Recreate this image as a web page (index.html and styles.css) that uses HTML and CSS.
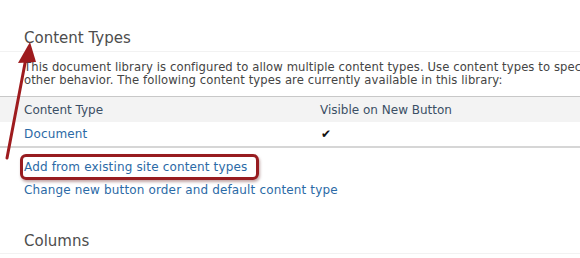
FILE: index.html
```
<html>
  <head>
    <title>Content Types</title>
    <link rel="stylesheet" href="styles.css">
  </head>
  <body>
    <div class="page">
      <h2 class="sectionTitle">Content Types</h2>
      <p class="description">
        <span class="line">This document library is configured to allow multiple content types. Use content types to specify the information you want to display about an item, in addition to its policies, workflows, or</span>
        <span class="line">other behavior. The following content types are currently available in this library:</span>
      </p>

      <div class="typesTable">
        <div class="row headRow">
          <span class="colName">Content Type</span>
          <span class="colVisible">Visible on New Button</span>
        </div>
        <div class="row">
          <a class="link colName" href="#">Document</a>
          <span class="colVisible check">&#10004;</span>
        </div>
      </div>

      <div class="actions">
        <span class="callout"><a class="link" href="#">Add from existing site content types</a></span>
        <a class="link" href="#">Change new button order and default content type</a>
      </div>

      <h2 class="sectionTitle columnsTitle">Columns</h2>
    </div>

    <svg class="arrow" width="60" height="180" viewBox="0 0 60 180">
      <line x1="7" y1="158" x2="26" y2="58" stroke="#9e1b1e" stroke-width="3" stroke-linecap="round"/>
      <polygon points="30,42 18,63 36,62" fill="#9e1b1e"/>
    </svg>
  </body>
</html>
```

FILE: styles.css
```
body {
  margin: 0;
  background-color: #ffffff;
  font-family: "DejaVu Sans", Verdana, sans-serif;
  overflow: hidden;
}

.page {
  width: 580px;
  overflow: hidden;
}

.sectionTitle {
  margin: 0;
  padding: 28px 0 0 24px;
  height: 23px;
  font-size: 15px;
  line-height: 20px;
  font-weight: normal;
  color: #4d4d4d;
  border-bottom: 1px solid #f2f2f2;
}

.description {
  margin: 0;
  padding: 9px 0 0 24px;
  height: 35px;
  font-size: 11.6px;
  line-height: 12.5px;
  letter-spacing: 0.1px;
  color: #444444;
}

.line {
  display: block;
  white-space: nowrap;
}

.typesTable {
  border-top: 1px solid #c8c8c8;
  border-bottom: 2px solid #d6d6d6;
}

.row {
  display: flex;
  align-items: center;
  height: 24px;
  font-size: 12px;
}

.headRow {
  background-color: #f3f3f3;
  color: #3b4f65;
  height: 25px;
}

.colName {
  width: 296px;
  padding-left: 24px;
}

.colVisible {
  flex: 1;
}

.check {
  font-size: 12px;
  font-weight: bold;
  color: #111111;
  padding-left: 1px;
}

.link {
  color: #2b6aa6;
  text-decoration: none;
  letter-spacing: 0.15px;
}

.actions {
  display: flex;
  flex-direction: column;
  align-items: flex-start;
  padding: 11px 0 0 24px;
  gap: 8px;
  font-size: 12px;
  line-height: 14px;
  height: 60px;
}

.callout {
  display: inline-block;
  margin: -5px 0 -5px -4px;
  padding: 3px 9px 3px 1px;
  border: 3px solid #971c20;
  border-radius: 6px;
  box-shadow: 1px 2px 3px rgba(80, 0, 0, 0.35);
}

.columnsTitle {
  padding-top: 12px;
  height: 22px;
}

.arrow {
  position: absolute;
  left: 0;
  top: 0;
}
```
